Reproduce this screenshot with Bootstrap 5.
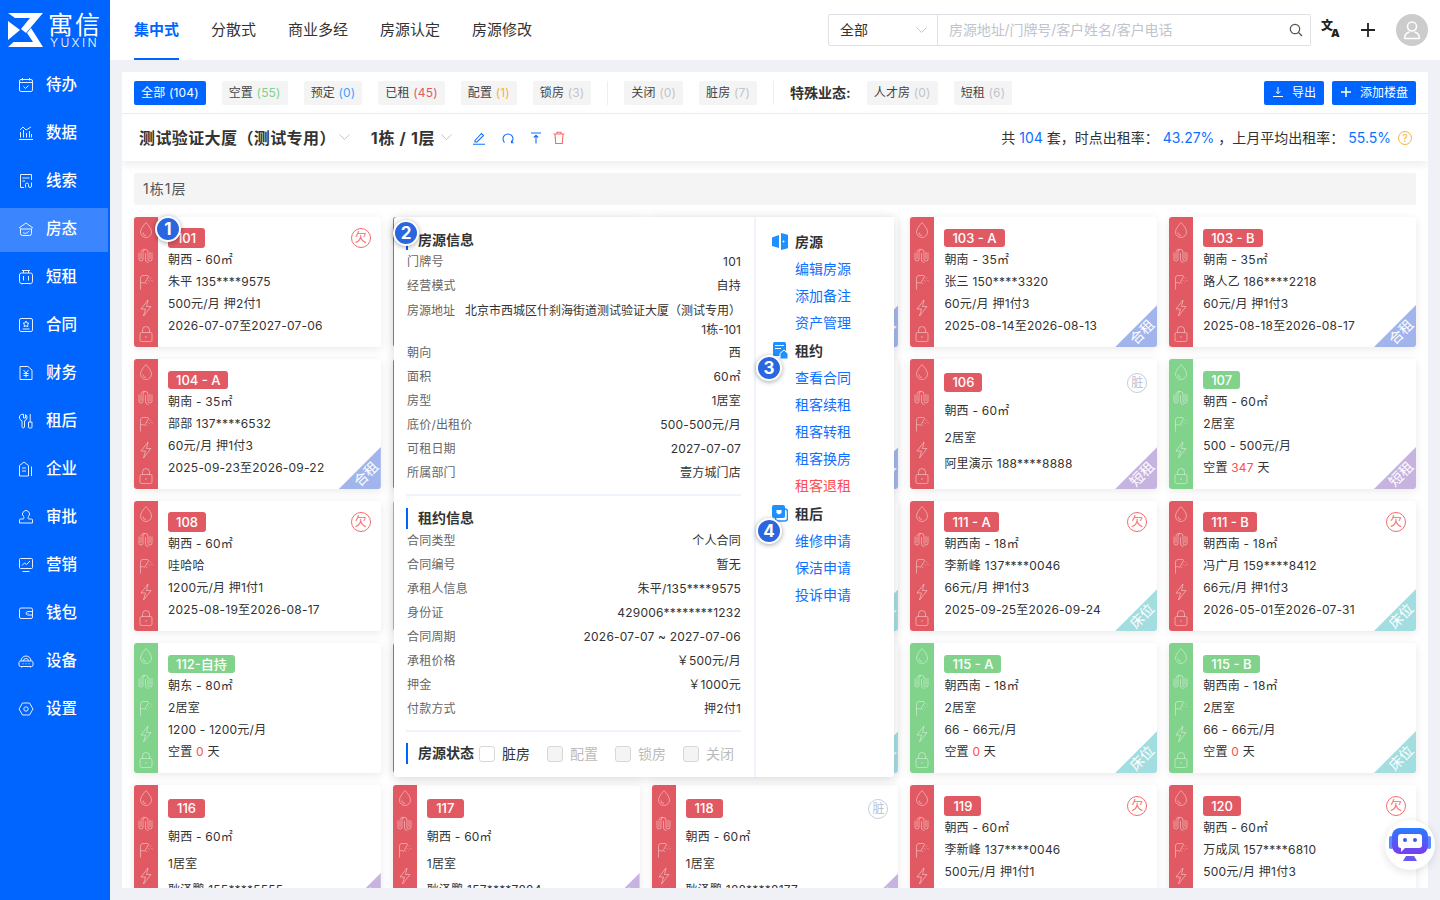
<!DOCTYPE html>
<html lang="zh-CN">
<head>
  <meta charset="UTF-8">
  <title>寓信 - 房态</title>
  <link href="https://cdn.jsdelivr.net/npm/bootstrap@5.3.0/dist/css/bootstrap.min.css" rel="stylesheet">
  <style>
    html, body { height: 100%; }
    body { font-family: Inter, "Noto Sans CJK SC", sans-serif; background: #eff1f6; color: #333; overflow: hidden; font-size: 12px; }
    /* sidebar */
    .side-nav { width: 110px; flex: 0 0 110px; background: #0064ff; color: #fff; }
    .logo-box { height: 64px; padding: 13px 0 0 8px; gap: 5px; }
    .logo-cn { font-size: 25px; line-height: 23px; letter-spacing: 2px; font-weight: 400; margin-top: 1px; white-space: nowrap; }
    .logo-en { font-size: 12px; line-height: 12px; letter-spacing: 2.4px; padding-left: 2px; font-weight: 300; }
    .side-item { height: 44px; margin-bottom: 4px; width: 108px; padding: 0 0 3px 18px; gap: 12px; color: #fff; text-decoration: none; font-size: 15.5px; font-weight: 500; }
    .side-item.active { background: #3b85ff; }
    .side-item svg { width: 16px; height: 16px; fill: none; stroke: #fff; stroke-width: 1; opacity: .9; flex: none; }
    /* top bar */
    .top-bar { height: 60px; background: #fff; padding: 0 12px 0 24px; flex: none; }
    .top-tab { height: 60px; line-height: 60px; margin-right: 32px; font-size: 15px; color: #333; text-decoration: none; border-bottom: 2px solid transparent; }
    .top-tab.active { color: #0064ff; font-weight: 700; border-bottom-color: #0064ff; }
    .search-box { width: 483px; height: 32px; }
    .search-box .form-select { flex: 0 0 110px; width: 110px; font-size: 14px; color: #333; padding: 0 11px 2px; border-radius: 2px 0 0 2px; background-position: right 10px center; background-size: 11px 7px; background-image: url("data:image/svg+xml,%3csvg xmlns='http://www.w3.org/2000/svg' viewBox='0 0 11 7'%3e%3cpath fill='none' stroke='%23c4c7cf' d='M.5 .5l5 5 5-5'/%3e%3c/svg%3e"); }
    .search-box .form-control { font-size: 14px; padding: 0 11px 2px; border-right: 0; letter-spacing: -.1px; }
    .search-box .form-control::placeholder { color: #c0c4cc; }
    .search-box .input-group-text { background: #fff; padding: 0 7px 0 4px; border-left: 0; border-radius: 0 2px 2px 0; }
    .lang-ico { margin-left: 10px; width: 18px; height: 20px; color: #222; font-weight: 700; line-height: 1; }
    .lang-ico b:first-child { font-size: 12px; }
    .lang-ico b:last-child { font-size: 11px; margin: 8px 0 0 -2px; }
    .add-ico { margin-left: 21px; width: 16px; height: 16px; }
    .user-pic { margin-left: 20px; width: 32px; height: 32px; background: #ccc; border-radius: 50%; }
    /* board */
    .work-area { padding: 12px; min-height: 0; }
    .board { background: #fff; height: 100%; overflow: hidden; }
    .filter-row { height: 42px; padding: 0 12px; border-bottom: 1px solid #eee; gap: 16px; flex: none; }
    .filter-chip { height: 24px; line-height: 24px; padding: 0 7px; background: #f4f4f5; border-radius: 2px; font-size: 12px; color: #444; white-space: nowrap; letter-spacing: .17px; }
    .filter-chip.on { background: #0064ff; color: #fff; }
    .num-green { color: #7ed28c; } .num-blue { color: #409eff; } .num-red { color: #e05a62; } .num-orange { color: #f9b13a; } .num-grey { color: #c0c4cc; }
    .filter-split { width: 1px; height: 24px; background: #eee; }
    .special-title { font-size: 14px; font-weight: 700; color: #333; }
    .head-btn { height: 24px; padding: 0 8px; font-size: 12px; line-height: 24px; border-radius: 2px; background: #0064ff; border: 0; white-space: nowrap; }
    .head-btn svg { width: 12px; height: 12px; fill: none; stroke: #fff; margin-right: 8px; vertical-align: -1px; }
    .title-row { height: 47px; padding: 0 16px 0 17px; box-shadow: 0 4px 8px rgba(0, 0, 0, .07); position: relative; flex: none; }
    .bld-name { font-size: 16px; font-weight: 700; color: #333; letter-spacing: .4px; }
    .bld-floor { letter-spacing: .7px; }
    .chev-ico { width: 11px; height: 7px; fill: none; stroke: #c4c7cf; stroke-width: 1; }
    .chev-first { margin: 0 21px 0 3px; }
    .chev-next { margin-left: 6px; }
    .tool-ico { width: 14px; height: 14px; fill: none; stroke-width: 1.1; margin-left: 15px; }
    .tool-first { margin-left: 20px; }
    .tool-third { margin-left: 14px; }
    .tool-last { margin-left: 9px; }
    .rate-text { font-size: 14px; color: #333; }
    .rate-text b { font-weight: 400; color: #0f6fff; }
    .help-ico { width: 14px; height: 14px; border: 1px solid #f9b13a; border-radius: 50%; color: #f9b13a; font-size: 10px; line-height: 12px; text-align: center; display: inline-block; margin-left: 7px; vertical-align: 1px; }
    .floor-wrap { padding: 12px; }
    .floor-head { height: 32px; line-height: 32px; padding-left: 9px; background: #f4f4f5; border-radius: 2px; font-size: 14px; color: #555; margin-bottom: 12px; letter-spacing: 1px; }
    /* cards */
    .room-grid { display: grid; grid-template-columns: repeat(5, 1fr); gap: 12px; position: relative; }
    .room-box { height: 130px; background: #fff; border-radius: 3px; box-shadow: 0 2px 10px rgba(0, 0, 0, .09); display: flex; overflow: hidden; position: relative; }
    .room-rail { flex: 0 0 24px; display: flex; flex-direction: column; align-items: center; }
    .room-rail svg { width: 16px; height: 18px; margin: 4px 0; flex: none; fill: none; stroke: rgba(255, 255, 255, .42); stroke-width: 1; }
    .tone-red .room-rail, .tone-red .room-no { background: #e15a63; }
    .tone-green .room-rail, .tone-green .room-no { background: #81d38c; }
    .room-info { padding: 12px 0 0 10px; font-size: 12px; color: #333; white-space: nowrap; letter-spacing: .22px; }
    .room-no { display: inline-block; height: 18px; line-height: 18px; min-width: 37px; padding: 0 8px; border-radius: 3px; color: #fff; font-size: 13px; text-align: center; margin-bottom: 2px; vertical-align: top; font-weight: 500; letter-spacing: 0; }
    .room-line { height: 22px; line-height: 22px; }
    .has-stamp .room-info { padding-top: 11px; }
    .has-stamp .room-no { height: 20px; line-height: 20px; margin-bottom: 1px; }
    .few-lines.room-info { padding-top: 14px; }
    .few-lines .room-no { height: 19px; line-height: 19px; margin-bottom: 6px; }
    .few-lines .room-line { height: 26.5px; line-height: 26.5px; }
    .room-stamp { position: absolute; top: 11px; right: 10px; width: 20px; height: 20px; border: 1px solid #f56c6c; border-radius: 50%; color: #f56c6c; font-size: 12px; line-height: 18px; text-align: center; }
    .room-stamp.stamp-dirty { border-color: #c4ccdc; color: #b9c2d6; top: 14px; }
    .room-corner { position: absolute; right: 0; bottom: 0; width: 42px; height: 42px; clip-path: polygon(100% 0, 100% 100%, 0 100%); color: #fff; font-size: 14px; }
    .room-corner span { position: absolute; right: -6px; bottom: 5px; width: 42px; text-align: center; line-height: 20px; transform: rotate(-45deg); }
    .corner-he { background: #a1b5ec; } .corner-duan { background: #c7b3e0; } .corner-chuang { background: #a2dde0; }
    .zero-days { color: #ff4d4f; }
    /* pop-up */
    .room-pop { position: absolute; left: 260px; top: 0; width: 500px; height: 560px; background: #fff; border-radius: 3px; box-shadow: 0 2px 12px rgba(0, 0, 0, .13); z-index: 5; display: flex; }
    .pop-left { width: 362px; flex: none; padding: 13px 13px 0 12px; border-right: 2px solid #eef3fd; white-space: nowrap; }
    .pop-title { height: 21px; line-height: 19px; font-size: 14px; font-weight: 700; color: #333; border-left: 2px solid #0064ff; padding-left: 10px; flex: none; }
    .pop-left > .pop-title:first-child { height: 20px; }
    .pop-row { display: flex; justify-content: space-between; height: 24px; line-height: 24px; padding-left: 1px; color: #333; letter-spacing: .2px; }
    .pop-row span:first-child { color: #666; }
    .pop-row.two-rows { height: 43px; line-height: 19px; padding-top: 2.5px; letter-spacing: 0; }
    .pop-split { height: 2px; background: #eef3fd; margin: 9px 0 12px; }
    .pop-status { margin-top: 11px; height: 21px; }
    .pop-check { gap: 7px; font-size: 14px; color: #333; margin-right: 17px; }
    .pop-check.off { color: #bbb; }
    .pop-check .form-check-input { margin: 0; width: 16px; height: 16px; border-radius: 3px; border-color: #d8d8d8; }
    .pop-check .form-check-input:disabled { background-color: #f4f4f5; opacity: 1; }
    .pop-right { flex: 1; padding: 11px 0 0 16px; }
    .menu-head { height: 27px; line-height: 27px; font-size: 14px; font-weight: 700; color: #333; gap: 7px; }
    .menu-head svg { width: 16px; height: 17px; flex: none; }
    .menu-link { display: block; height: 27px; line-height: 27px; margin-left: 23px; font-size: 14px; color: #0f6fff; text-decoration: none; }
    .menu-link.danger { color: #ff4d4f; }
    .menu-gap { margin-top: 1px; }
    /* numbered markers */
    .step-dot { position: absolute; width: 26px; height: 26px; line-height: 22px; border: 2px solid #fff; border-radius: 50%; background: #2a66e0; color: #fff; font-size: 17px; font-weight: 700; text-align: center; box-shadow: 0 1px 5px rgba(0, 0, 0, .35); z-index: 6; }
    .robot-btn { position: fixed; left: 1385px; top: 820px; width: 50px; height: 50px; border-radius: 50%; background: #fff; box-shadow: 0 2px 10px rgba(0, 0, 0, .12); z-index: 9; }
  </style>
</head>
<body class="d-flex">
  <svg width="0" height="0" class="position-absolute">
    <symbol id="i-drop" viewBox="0 0 16 18"><path d="M8 1.500C6 4 2.500 7.500 2.500 11a5.500 5.500 0 0 0 11 0C13.500 7.500 10 4 8 1.500z"/><path d="M5 11.500a3 3 0 0 0 3 3"/></symbol>
    <symbol id="i-coil" viewBox="0 0 16 18"><path d="M1 5.500V12a2 2 0 0 0 4 0V5a2.500 2.500 0 0 1 5 0v7a2 2 0 0 0 4 0V5.500"/><path d="M3 5.500V12M3 5a3 3 0 0 1 4-2.500M7.500 6v7a3 3 0 0 0 3 2.500M12 5v7"/></symbol>
    <symbol id="i-shower" viewBox="0 0 16 18"><path d="M2.500 16.500V5c0-1.500 1-2.500 2.500-2.500h4.500c.5 0 1 .5 1 1L7 10c-1 .5-2.500-.5-2.500-.5l-2 .5"/><path d="M12 4.500l1 1M10.500 7.500l1 1M13.500 7.500l1 .5M8.500 10l.5 1"/></symbol>
    <symbol id="i-bolt" viewBox="0 0 16 18"><path d="M10 1L3 10h4.500L5.500 17 13 7.500H8.500z"/></symbol>
    <symbol id="i-lock" viewBox="0 0 16 18"><rect x="2" y="7.500" width="12" height="9" rx="1.500"/><path d="M4.500 7.500V5a3.500 3.500 0 0 1 7 0v2.500M8 11v2"/></symbol>
    <symbol id="i-chev" viewBox="0 0 11 7"><path d="M.5 .5l5 5 5-5"/></symbol>
  </svg>

  <aside class="side-nav d-flex flex-column">
    <div class="logo-box d-flex">
      <svg width="35" height="34" viewBox="0 0 35 34" fill="#fff"><path d="M0 0h35L18 20l-5-4 9-11H7z"/><path d="M0 8l12 9-12 10z"/><path d="M23 15l12 19H0l5.500-5H25l-6-9z"/></svg>
      <div>
        <div class="logo-cn">寓信</div>
        <div class="logo-en">YUXIN</div>
      </div>
    </div>
    <a class="side-item d-flex align-items-center" href="#"><svg viewBox="0 0 16 16"><rect x="1.500" y="2.500" width="13" height="12" rx="1.500"/><path d="M1.500 5.500h13M4.500 1v2.500M11.500 1v2.500M5.500 9.500l2 2 3-3"/></svg>待办</a>
    <a class="side-item d-flex align-items-center" href="#"><svg viewBox="0 0 16 16"><path d="M1 14.500h14M2.500 12.500V7M5.500 12.500V5M8.500 12.500V8M11.500 12.500V6M13.500 12.500V9M2 5l3-3 3 3 5-3"/></svg>数据</a>
    <a class="side-item d-flex align-items-center" href="#"><svg viewBox="0 0 16 16"><path d="M6 14.500H2.500v-13h11V7M4.500 5h7M4.500 8h2.500"/><path d="M7.500 14.500v-3a1.500 1.500 0 0 1 3 0v1.500a1.500 1.500 0 0 0 3 0v-3.500"/></svg>线索</a>
    <a class="side-item d-flex align-items-center active" href="#"><svg viewBox="0 0 16 16"><path d="M1 7l7-5 7 5M2.500 7.500v5a2 2 0 0 0 2 2h7a2 2 0 0 0 2-2v-5M2.500 8h11M5 11.500c2 1.500 4 1 6-1.500"/></svg>房态</a>
    <a class="side-item d-flex align-items-center" href="#"><svg viewBox="0 0 16 16"><rect x="1.500" y="4" width="13" height="10.500" rx="2"/><path d="M4 1.500h8M5.500 1.500V4M10.500 1.500V4M5.500 7v4.500M10.500 7v4.500M4 14.500v1M12 14.500v1"/></svg>短租</a>
    <a class="side-item d-flex align-items-center" href="#"><svg viewBox="0 0 16 16"><rect x="1.500" y="1.500" width="13" height="13" rx="1.500"/><path d="M8 4l1 2 2 .3-1.500 1.400.4 2L8 8.800l-1.900.9.400-2L5 6.300 7 6zM4.500 12h7"/></svg>合同</a>
    <a class="side-item d-flex align-items-center" href="#"><svg viewBox="0 0 16 16"><path d="M2 1.500h8l4 3.500v9.500H2zM5.500 5l2.500 3 2.500-3M8 8v4.500M5.500 8.500h5M5.500 10.500h5"/></svg>财务</a>
    <a class="side-item d-flex align-items-center" href="#"><svg viewBox="0 0 16 16"><path d="M3 1.500a3.500 3.500 0 0 0 1 6.300V14a1.300 1.300 0 0 0 2.500 0V7.800A3.500 3.500 0 0 0 7.500 1.500V5h-2V1.200zM10.500 9h3.500v5a1 1 0 0 1-1 1h-1.500a1 1 0 0 1-1-1zM12.200 1v8"/></svg>租后</a>
    <a class="side-item d-flex align-items-center" href="#"><svg viewBox="0 0 16 16"><path d="M1.500 15V4.500L6 1l4.500 3.500V15zM4 7h4M4 10h4M13.500 5.500V15"/></svg>企业</a>
    <a class="side-item d-flex align-items-center" href="#"><svg viewBox="0 0 16 16"><path d="M5.500 7.500a3.500 3.500 0 1 1 5 0c-.7.800-.5 1.500 0 2.500h3a1 1 0 0 1 1 1v3h-13v-3a1 1 0 0 1 1-1h3c.5-1 .7-1.700 0-2.500z"/></svg>审批</a>
    <a class="side-item d-flex align-items-center" href="#"><svg viewBox="0 0 16 16"><rect x="1.500" y="1.500" width="13" height="10" rx="1"/><path d="M4 8.500l2.500-2.500 2 1.500 3.500-3.500M4.500 14.500h7"/></svg>营销</a>
    <a class="side-item d-flex align-items-center" href="#"><svg viewBox="0 0 16 16"><rect x="1.500" y="3" width="13" height="10.500" rx="1.500"/><path d="M14.500 6.500h-5a1.800 1.800 0 0 0 0 3.500h5M9.500 8.200h1"/></svg>钱包</a>
    <a class="side-item d-flex align-items-center" href="#"><svg viewBox="0 0 16 16"><rect x="1" y="8" width="14" height="5.500" rx="1.500"/><path d="M3 8a5 5 0 0 1 10 0M5.500 8a2.500 2.500 0 0 1 5 0M4.500 10.800h1M7.500 10.800h1M10.500 10.800h1M3.500 13.500v1M12.500 13.500v1"/></svg>设备</a>
    <a class="side-item d-flex align-items-center" href="#"><svg viewBox="0 0 16 16"><path d="M4.500 2h7L15 8l-3.500 6h-7L1 8z"/><circle cx="8" cy="8" r="2.200"/></svg>设置</a>
  </aside>

  <main class="flex-grow-1 d-flex flex-column" style="min-width:0">
    <header class="top-bar d-flex align-items-center">
      <nav class="d-flex">
        <a class="top-tab active" href="#">集中式</a>
        <a class="top-tab" href="#">分散式</a>
        <a class="top-tab" href="#">商业多经</a>
        <a class="top-tab" href="#">房源认定</a>
        <a class="top-tab" href="#">房源修改</a>
      </nav>
      <div class="input-group search-box ms-auto">
        <select class="form-select"><option>全部</option></select>
        <input type="text" class="form-control" placeholder="房源地址/门牌号/客户姓名/客户电话">
        <span class="input-group-text"><svg width="14" height="14" viewBox="0 0 14 14" fill="none" stroke="#555" stroke-width="1.200"><circle cx="6" cy="6" r="4.700"/><path d="M9.500 9.500l3.500 3.500"/></svg></span>
      </div>
      <span class="lang-ico d-flex"><b>文</b><b>A</b></span>
      <svg class="add-ico" viewBox="0 0 16 16" stroke="#222" stroke-width="1.800"><path d="M8 1v14M1 8h14"/></svg>
      <span class="user-pic d-flex align-items-center justify-content-center"><svg width="18" height="20" viewBox="0 0 18 20" fill="none" stroke="#fff" stroke-width="1.500"><circle cx="9" cy="6.500" r="4.500"/><path d="M1.500 18.500c0-4 3-6 5-6.500M16.500 18.500c0-4-3-6-5-6.500M1.500 18.500h15"/></svg></span>
    </header>

    <div class="work-area flex-grow-1">
      <div class="board d-flex flex-column">
        <div class="filter-row d-flex align-items-center">
          <span class="filter-chip on">全部 (104)</span>
          <span class="filter-chip">空置 <span class="num-green">(55)</span></span>
          <span class="filter-chip">预定 <span class="num-blue">(0)</span></span>
          <span class="filter-chip">已租 <span class="num-red">(45)</span></span>
          <span class="filter-chip">配置 <span class="num-orange">(1)</span></span>
          <span class="filter-chip">锁房 <span class="num-grey">(3)</span></span>
          <span class="filter-split"></span>
          <span class="filter-chip">关闭 <span class="num-grey">(0)</span></span>
          <span class="filter-chip">脏房 <span class="num-grey">(7)</span></span>
          <span class="filter-split"></span>
          <span class="special-title">特殊业态:</span>
          <span class="filter-chip">人才房 <span class="num-grey">(0)</span></span>
          <span class="filter-chip">短租 <span class="num-grey">(6)</span></span>
          <div class="ms-auto d-flex gap-2">
            <button class="btn btn-primary head-btn"><svg viewBox="0 0 12 12"><path d="M6 1v6.500M3.800 5.500L6 7.700l2.200-2.200M1 10.500h10"/></svg>导出</button>
            <button class="btn btn-primary head-btn"><svg viewBox="0 0 12 12" stroke-width="1.500"><path d="M6 1v10M1 6h10"/></svg>添加楼盘</button>
          </div>
        </div>

        <div class="title-row d-flex align-items-center">
          <span class="bld-name">测试验证大厦（测试专用）</span>
          <svg class="chev-ico chev-first"><use href="#i-chev"/></svg>
          <span class="bld-name bld-floor">1栋 / 1层</span>
          <svg class="chev-ico chev-next"><use href="#i-chev"/></svg>
          <svg class="tool-ico tool-first" viewBox="0 0 14 14" stroke="#0f6fff"><path d="M3 9.500L9.500 2.500l2 2L5 11H3zM1 13.300h12"/></svg>
          <svg class="tool-ico" viewBox="0 0 14 14" stroke="#0f6fff"><path d="M3.500 11.500a5 5 0 1 1 7 0M10.500 9.500v2.300h2"/></svg>
          <svg class="tool-ico tool-third" viewBox="0 0 14 14" stroke="#0f6fff"><path d="M2 2h10M7 12.500V4.500M4.800 6.500L7 4.300l2.200 2.200"/></svg>
          <svg class="tool-ico tool-last" viewBox="0 0 14 14" stroke="#f56c6c"><path d="M1.500 3h11M3 3l.7 9.500h6.600L11 3M5 3V1.300h4V3"/></svg>
          <span class="rate-text ms-auto">共 <b>104</b> 套，时点出租率： <b>43.27%</b> ，上月平均出租率： <b>55.5%</b><span class="help-ico">?</span></span>
        </div>

        <div class="floor-wrap">
          <div class="floor-head">1栋1层</div>
          <div class="room-grid" id="roomGrid">
            <span class="step-dot" style="left:21px;top:-1px">1</span>
            <span class="step-dot" style="left:259px;top:3px">2</span>
            <span class="step-dot" style="left:622px;top:138px">3</span>
            <span class="step-dot" style="left:622px;top:301px">4</span>

            <div class="room-pop">
              <div class="pop-left">
                <div class="pop-title">房源信息</div>
                <div class="pop-row"><span>门牌号</span><span>101</span></div>
                <div class="pop-row"><span>经营模式</span><span>自持</span></div>
                <div class="pop-row two-rows"><span>房源地址</span><span class="text-end">北京市西城区什刹海街道测试验证大厦（测试专用）<br>1栋-101</span></div>
                <div class="pop-row"><span>朝向</span><span>西</span></div>
                <div class="pop-row"><span>面积</span><span>60㎡</span></div>
                <div class="pop-row"><span>房型</span><span>1居室</span></div>
                <div class="pop-row"><span>底价/出租价</span><span>500-500元/月</span></div>
                <div class="pop-row"><span>可租日期</span><span>2027-07-07</span></div>
                <div class="pop-row"><span>所属部门</span><span>壹方城门店</span></div>
                <div class="pop-split"></div>
                <div class="pop-title">租约信息</div>
                <div class="pop-row"><span>合同类型</span><span>个人合同</span></div>
                <div class="pop-row"><span>合同编号</span><span>暂无</span></div>
                <div class="pop-row"><span>承租人信息</span><span>朱平/135****9575</span></div>
                <div class="pop-row"><span>身份证</span><span>429006********1232</span></div>
                <div class="pop-row"><span>合同周期</span><span>2026-07-07 ~ 2027-07-06</span></div>
                <div class="pop-row"><span>承租价格</span><span>￥500元/月</span></div>
                <div class="pop-row"><span>押金</span><span>￥1000元</span></div>
                <div class="pop-row"><span>付款方式</span><span>押2付1</span></div>
                <div class="pop-split mb-0"></div>
                <div class="pop-status d-flex align-items-center">
                  <div class="pop-title" style="width:73px">房源状态</div>
                  <label class="pop-check d-flex align-items-center"><input class="form-check-input" type="checkbox">脏房</label>
                  <label class="pop-check off d-flex align-items-center"><input class="form-check-input" type="checkbox" disabled>配置</label>
                  <label class="pop-check off d-flex align-items-center"><input class="form-check-input" type="checkbox" disabled>锁房</label>
                  <label class="pop-check off d-flex align-items-center"><input class="form-check-input" type="checkbox" disabled>关闭</label>
                </div>
              </div>
              <div class="pop-right">
                <div class="menu-head d-flex align-items-center"><svg viewBox="0 0 16 17"><path fill="#1e90ff" d="M0 4.500L7 2v13l-7-2z"/><path fill="#1e90ff" d="M9 0l6 1.500a1 1 0 0 1 1 1v12a1 1 0 0 1-1 1L9 17z"/><circle cx="11.500" cy="8.500" r="1" fill="#fff"/></svg>房源</div>
                <a class="menu-link" href="#">编辑房源</a>
                <a class="menu-link" href="#">添加备注</a>
                <a class="menu-link" href="#">资产管理</a>
                <div class="menu-head menu-gap d-flex align-items-center"><svg viewBox="0 0 16 17"><rect x="1" y="0" width="13" height="14" rx="1.500" fill="#1e90ff"/><path d="M3 3.500h9M3 6.500h6" stroke="#fff" stroke-width="1.200"/><path d="M8 11.500l4-3.500 4 3.500V17H8z" fill="#1e90ff" stroke="#fff"/></svg>租约</div>
                <a class="menu-link" href="#">查看合同</a>
                <a class="menu-link" href="#">租客续租</a>
                <a class="menu-link" href="#">租客转租</a>
                <a class="menu-link" href="#">租客换房</a>
                <a class="menu-link danger" href="#">租客退租</a>
                <div class="menu-head menu-gap d-flex align-items-center"><svg viewBox="0 0 16 17"><rect x="0" y="0" width="13" height="13" rx="2" fill="#1e90ff"/><rect x="3.500" y="4" width="12" height="12" rx="2.500" fill="none" stroke="#1e90ff" stroke-width="1.500"/><path d="M4.500 5h5v3l-2.500 1.500L4.500 8z" fill="#fff"/></svg>租后</div>
                <a class="menu-link" href="#">维修申请</a>
                <a class="menu-link" href="#">保洁申请</a>
                <a class="menu-link" href="#">投诉申请</a>
              </div>
            </div>
          </div>
        </div>
      </div>
    </div>
  </main>

  <div class="robot-btn d-flex align-items-center justify-content-center">
    <svg width="42" height="34" viewBox="0 0 42 34">
      <defs><linearGradient id="robotFill" x1="0" y1="0" x2="0" y2="1"><stop offset="0" stop-color="#2a7bff"/><stop offset="1" stop-color="#7a3cf0"/></linearGradient></defs>
      <rect x="0" y="8" width="4" height="13" rx="2" fill="#5a8cff"/>
      <rect x="38" y="8" width="4" height="13" rx="2" fill="#5a8cff"/>
      <rect x="3" y="0" width="36" height="26" rx="8" fill="url(#robotFill)"/>
      <path d="M12 6h18a3 3 0 0 1 3 3v8a3 3 0 0 1-3 3H16l-4 4v-4a3 3 0 0 1-3-3V9a3 3 0 0 1 3-3z" fill="#fff"/>
      <circle cx="16" cy="12" r="2" fill="#3a5bea"/>
      <circle cx="26" cy="12" r="2" fill="#3a5bea"/>
      <path d="M17 28h8l3 5H14z" fill="#6a5af0"/>
    </svg>
  </div>

  <script src="https://cdn.jsdelivr.net/npm/bootstrap@5.3.0/dist/js/bootstrap.bundle.min.js"></script>
  <script>
    const grid = document.getElementById("roomGrid");
    const cornerClass = { "合租": "corner-he", "短租": "corner-duan", "床位": "corner-chuang" };
    const zero = n => `空置 <span class="zero-days">${n}</span> 天`;

    // 第二、三列前四行被弹层挡住，只留色条和角标
    const rooms = [
      { no: "101", tone: "red", stamp: "欠", lines: ["朝西 - 60㎡", "朱平 135****9575", "500元/月 押2付1", "2026-07-07至2027-07-06"] },
      { tone: "red" },
      { tone: "red", corner: "合租" },
      { no: "103 - A", tone: "red", corner: "合租", lines: ["朝南 - 35㎡", "张三 150****3320", "60元/月 押1付3", "2025-08-14至2026-08-13"] },
      { no: "103 - B", tone: "red", corner: "合租", lines: ["朝南 - 35㎡", "路人乙 186****2218", "60元/月 押1付3", "2025-08-18至2026-08-17"] },

      { no: "104 - A", tone: "red", corner: "合租", lines: ["朝南 - 35㎡", "部部 137****6532", "60元/月 押1付3", "2025-09-23至2026-09-22"] },
      { tone: "red" },
      { tone: "red", corner: "合租" },
      { no: "106", tone: "red", stamp: "脏", corner: "短租", lines: ["朝西 - 60㎡", "2居室", "阿里演示 188****8888"] },
      { no: "107", tone: "green", corner: "短租", lines: ["朝西 - 60㎡", "2居室", "500 - 500元/月", zero(347)] },

      { no: "108", tone: "red", stamp: "欠", lines: ["朝西 - 60㎡", "哇哈哈", "1200元/月 押1付1", "2025-08-19至2026-08-17"] },
      { tone: "green" },
      { tone: "red", corner: "床位" },
      { no: "111 - A", tone: "red", stamp: "欠", corner: "床位", lines: ["朝西南 - 18㎡", "李新峰 137****0046", "66元/月 押1付3", "2025-09-25至2026-09-24"] },
      { no: "111 - B", tone: "red", stamp: "欠", corner: "床位", lines: ["朝西南 - 18㎡", "冯广月 159****8412", "66元/月 押1付3", "2026-05-01至2026-07-31"] },

      { no: "112-自持", tone: "green", lines: ["朝东 - 80㎡", "2居室", "1200 - 1200元/月", zero(0)] },
      { tone: "red" },
      { tone: "green", corner: "床位" },
      { no: "115 - A", tone: "green", corner: "床位", lines: ["朝西南 - 18㎡", "2居室", "66 - 66元/月", zero(0)] },
      { no: "115 - B", tone: "green", corner: "床位", lines: ["朝西南 - 18㎡", "2居室", "66 - 66元/月", zero(0)] },

      { no: "116", tone: "red", corner: "短租", lines: ["朝西 - 60㎡", "1居室", "耿泽鹏 155****5555"] },
      { no: "117", tone: "red", corner: "短租", lines: ["朝西 - 60㎡", "1居室", "耿泽鹏 157****7884"] },
      { no: "118", tone: "red", stamp: "脏", corner: "短租", lines: ["朝西 - 60㎡", "1居室", "耿泽鹏 188****8177"] },
      { no: "119", tone: "red", stamp: "欠", lines: ["朝西 - 60㎡", "李新峰 137****0046", "500元/月 押1付1"] , full: true },
      { no: "120", tone: "red", stamp: "欠", lines: ["朝西 - 60㎡", "万成凤 157****6810", "500元/月 押1付3"], full: true }
    ];

    const railIcons = ["drop", "coil", "shower", "bolt", "lock"]
      .map(n => `<svg><use href="#i-${n}"/></svg>`).join("");

    rooms.forEach(r => {
      const lines = r.lines || [];
      const few = lines.length === 3 && !r.full;
      grid.insertAdjacentHTML("beforeend", `
        <div class="room-box tone-${r.tone} ${r.stamp ? "has-stamp" : ""}">
          <div class="room-rail">${railIcons}</div>
          <div class="room-info ${few ? "few-lines" : ""}">
            ${r.no ? `<span class="room-no">${r.no}</span>` : ""}
            ${lines.map(l => `<div class="room-line">${l}</div>`).join("")}
          </div>
          ${r.stamp ? `<span class="room-stamp ${r.stamp === "脏" ? "stamp-dirty" : ""}">${r.stamp}</span>` : ""}
          ${r.corner ? `<div class="room-corner ${cornerClass[r.corner]}"><span>${r.corner}</span></div>` : ""}
        </div>`);
    });
  </script>
</body>
</html>
